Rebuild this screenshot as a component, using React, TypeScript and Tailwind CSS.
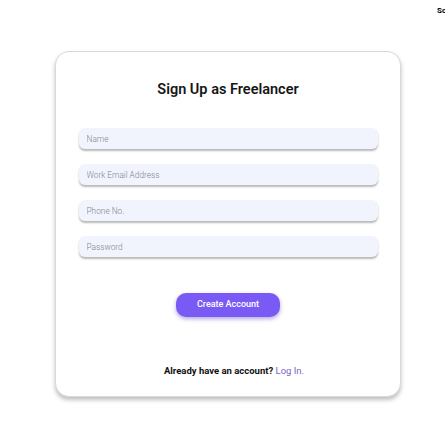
export default function App() {
  const fields = ["Name", "Work Email Address", "Phone No.", "Password"]

  return (
    <div className="relative min-h-[444px] w-full overflow-hidden bg-white font-['Roboto',sans-serif]">
      {/* Top right nav link, cut off by the viewport */}
      <div className="flex h-[51px] items-start pl-[437px] pt-[6px]">
        <span className="whitespace-nowrap text-[8px] font-bold leading-[10px] text-black">Sc</span>
      </div>

      {/* Card */}
      <div className="ml-[55px] flex h-[346px] w-[346px] flex-col items-center rounded-[14px] border border-[#d9d9d9] bg-white pt-[28px] pb-[20px] shadow-[0_3px_4px_rgba(0,0,0,0.25)]">
        <h1 className="text-[14.5px] font-semibold leading-[20px] text-[#161616]">Sign Up as Freelancer</h1>

        <div className="mt-[28px] flex w-[299px] flex-col gap-[15px]">
          {fields.map((f) => (
            <input
              key={f}
              placeholder={f}
              className="h-[21px] w-full rounded-[6px] bg-[#f1f3fd] pl-[8px] text-[8.3px] font-light text-[#555] shadow-[0_2px_2px_rgba(0,0,0,0.28)] outline-none placeholder:text-[#80848e]"
            />
          ))}
        </div>

        <button className="mt-[36px] h-[24px] w-[104px] rounded-[10px] bg-[#7a5af5] text-[9px] font-medium text-white shadow-[0_2px_4px_rgba(90,60,200,0.45)]">
          Create Account
        </button>

        <p className="mt-[49px] ml-[12px] text-[9.5px] font-bold leading-[10px] text-[#111]">
          Already have an account? <span className="font-normal text-[#7567c4]">Log In.</span>
        </p>
      </div>
    </div>
  )
}
